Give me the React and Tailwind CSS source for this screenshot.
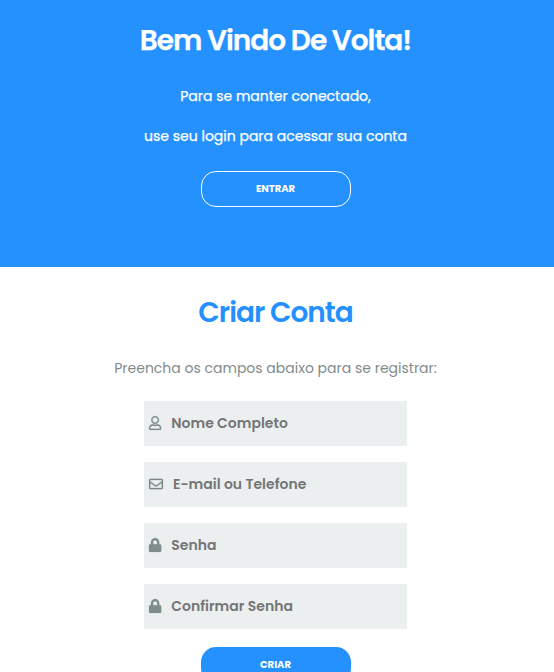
import React from "react";
import { FaRegUser, FaRegEnvelope, FaLock } from "react-icons/fa";

function Field({ icon: Icon, iconClass, label }) {
  return (
    <label className="flex h-[45px] w-[263px] items-center bg-[#ebeff0] pl-[5px]">
      <Icon className={`mb-0.5 h-3.5 shrink-0 overflow-visible stroke-[7px] text-[#7f8c8c] ${iconClass}`} />
      <span className="ml-2.5 whitespace-nowrap text-[14px] font-semibold text-[#757575]">{label}</span>
    </label>
  );
}

export default function App() {
  return (
    <div className="h-[672px] overflow-hidden bg-white font-['Poppins','Inter',sans-serif]">
      <section className="h-[267px] bg-[#2491ff] text-white">
        <div className="flex w-[551px] flex-col items-center whitespace-nowrap">
          <h1 className="mt-[21px] text-[28px] leading-10 font-semibold tracking-[-1px] [-webkit-text-stroke:0.25px_white]">Bem Vindo De Volta!</h1>
          <p className="mt-[15px] text-[14px] leading-10 [-webkit-text-stroke:0.25px_white]">Para se manter conectado,</p>
          <p className="text-[14px] leading-10 [-webkit-text-stroke:0.25px_white]">use seu login para acessar sua conta</p>
          <button className="mt-[15px] h-9 w-[150px] rounded-[15px] border border-white pb-0.5 text-[10px] font-bold">ENTRAR</button>
        </div>
      </section>
      <section className="flex w-[551px] flex-col items-center whitespace-nowrap">
        <h2 className="mt-[26px] text-[28px] leading-10 font-semibold tracking-[-1px] text-[#2491ff]">Criar Conta</h2>
        <p className="mt-[15px] text-[14px] leading-10 text-[#7f8c8c]">Preencha os campos abaixo para se registrar:</p>
        <form className="mt-[13px] flex flex-col gap-4">
          <Field icon={FaRegUser} iconClass="w-[12.25px]" label="Nome Completo" />
          <Field icon={FaRegEnvelope} iconClass="w-3.5" label="E-mail ou Telefone" />
          <Field icon={FaLock} iconClass="w-[12.25px]" label="Senha" />
          <Field icon={FaLock} iconClass="w-[12.25px]" label="Confirmar Senha" />
        </form>
        <button className="mt-[18px] h-9 w-[150px] rounded-[15px] bg-[#2491ff] pb-0.5 text-[10px] font-bold text-white">CRIAR</button>
      </section>
    </div>
  );
}
